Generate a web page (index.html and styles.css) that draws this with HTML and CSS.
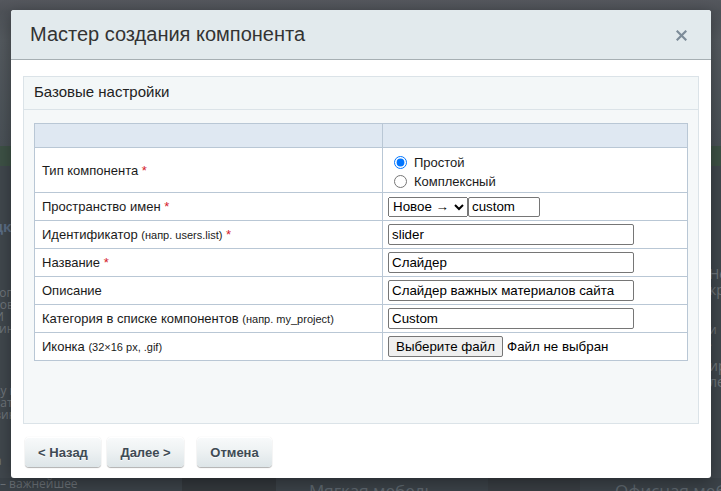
FILE: index.html
```html
<!DOCTYPE html>
<html lang="ru">
<head>
<meta charset="utf-8">
<title>Мастер создания компонента</title>
<link rel="stylesheet" href="styles.css">
</head>
<body>
<div class="page">
  <div class="page-top"></div>
  <div class="page-nav"></div>
  <div class="page-body">
    <div class="page-left">
      <p class="bg-title">Скидки</p>
      <p class="bg-text b1">Каталог нов<br>товаров не и<br>сайт.И<br>магазинт о</p>
      <p class="bg-text b2">Скидку в<br>покупатащ<br>Магазиной</p>
      <p class="bg-text b3">Папка</p>
      <p class="bg-strong">Ме</p>
    </div>
    <div class="page-right">
      <p class="bg-text r1">Не<br>кр</p>
      <p class="bg-text r2">и<br>.</p>
      <p class="bg-text r3">ир<br>ле</p>
    </div>
  </div>
  <div class="page-bottom">
    <p class="bg-small">– важнейшее</p>
    <div class="bg-img"></div>
    <p class="bg-item first">Мягкая мебель</p>
    <div class="bg-img second"></div>
    <p class="bg-item last">Офисная мебель</p>
  </div>
</div>

<div class="dialog">
  <div class="dialog-head">
    <span class="dialog-title">Мастер создания компонента</span>
    <svg class="close" width="11" height="11" viewBox="0 0 11 11"><path d="M1.5 1.5 L9.5 9.5 M9.5 1.5 L1.5 9.5" stroke="#7d8c99" stroke-width="2.2" stroke-linecap="square"/></svg>
  </div>
  <div class="dialog-body">
    <div class="panel">
      <div class="panel-head">Базовые настройки</div>
      <div class="panel-body">
        <table class="form">
          <tr class="head"><td class="c1"></td><td class="c2"></td></tr>
          <tr class="tall">
            <td class="c1">Тип компонента <span class="req">*</span></td>
            <td class="c2">
              <label class="radio"><input type="radio" name="t" checked><span>Простой</span></label>
              <label class="radio"><input type="radio" name="t"><span>Комплексный</span></label>
            </td>
          </tr>
          <tr>
            <td class="c1">Пространство имен <span class="req">*</span></td>
            <td class="c2"><div class="ns"><select class="sel"><option>Новое →</option></select><input class="short" type="text" value="custom"></div></td>
          </tr>
          <tr>
            <td class="c1">Идентификатор <small>(напр. users.list)</small> <span class="req">*</span></td>
            <td class="c2"><input class="txt" type="text" value="slider"></td>
          </tr>
          <tr>
            <td class="c1">Название <span class="req">*</span></td>
            <td class="c2"><input class="txt" type="text" value="Слайдер"></td>
          </tr>
          <tr>
            <td class="c1">Описание</td>
            <td class="c2"><input class="txt" type="text" value="Слайдер важных материалов сайта"></td>
          </tr>
          <tr>
            <td class="c1">Категория в списке компонентов <small>(напр. my_project)</small></td>
            <td class="c2"><input class="txt" type="text" value="Custom"></td>
          </tr>
          <tr>
            <td class="c1">Иконка <small>(32×16 px, .gif)</small></td>
            <td class="c2"><div class="file"><button class="file-btn" type="button">Выберите файл</button><span>Файл не выбран</span></div></td>
          </tr>
        </table>
      </div>
    </div>
    <div class="buttons">
      <button class="btn" type="button">&lt; Назад</button>
      <button class="btn" type="button">Далее &gt;</button>
      <button class="btn cancel" type="button">Отмена</button>
    </div>
  </div>
</div>
</body>
</html>
```

FILE: styles.css
```css
html, body {
  margin: 0;
  padding: 0;
  height: 100%;
  overflow: hidden;
}
body {
  font-family: "Liberation Sans", Arial, sans-serif;
  background: #3e454b;
  position: relative;
}
p { margin: 0; }

/* dimmed page behind the modal */
.page {
  height: 491px;
  display: flex;
  flex-direction: column;
}
.page-top {
  height: 146px;
  flex: none;
  background: linear-gradient(180deg, #55585e 0, #4e5258 12px, #545a5f 40px, #4a5157 145px);
}
.page-nav {
  height: 20px;
  flex: none;
  background: #3d5145;
}
.page-body {
  flex: 1;
  display: flex;
  justify-content: space-between;
  background: #40474d;
  overflow: hidden;
}
.page-left {
  margin-left: -34px;
  width: 60px;
  display: flex;
  flex-direction: column;
}
.page-right {
  margin-right: -12px;
  width: 24px;
  display: flex;
  flex-direction: column;
}
.bg-title {
  margin-top: 53px;
  font: bold 14px/16px "Open Sans", sans-serif;
  color: #5b6e86;
  white-space: nowrap;
}
.bg-text {
  font: 12px/12px "Open Sans", sans-serif;
  color: #6f757a;
  white-space: nowrap;
}
.b1 { margin-top: 52px; }
.b2 { margin-top: 50px; }
.b3 { margin-top: 34px; }
.bg-strong {
  margin-top: 2px;
  font: bold 13px/14px "Open Sans", sans-serif;
  color: #5c6166;
}
.r1 { margin-top: 100px; font-size: 14px; line-height: 16px; }
.r2 { margin-top: 26px; }
.r3 { margin-top: 10px; font-size: 14px; line-height: 16px; }

.page-bottom {
  height: 13px;
  flex: none;
  display: flex;
  align-items: flex-start;
  background: #3b4248;
  overflow: hidden;
}
.bg-small {
  width: 182px;
  flex: none;
  font: 12px/11px "Open Sans", sans-serif;
  color: #6a7076;
  white-space: nowrap;
}
.bg-img { width: 94px; height: 13px; flex: none; background: #33383c; }
.bg-img.second { width: 92px; background: #383d42; }
.bg-item {
  box-sizing: border-box;
  flex: none;
  padding-top: 3px;
  font: 17px/20px "Open Sans", sans-serif;
  color: #5d666d;
  white-space: nowrap;
}
.bg-item.first { width: 212px; padding-left: 33px; overflow: hidden; }
.bg-item.last { padding-left: 35px; }

/* modal dialog */
.dialog {
  position: absolute;
  left: 11px;
  top: 10px;
  width: 700px;
  height: 468px;
  background: #fff;
  border-radius: 3px;
  box-shadow: 0 4px 16px rgba(0, 0, 0, 0.35);
  display: flex;
  flex-direction: column;
  overflow: hidden;
}
.dialog-head {
  height: 49px;
  flex: none;
  background: #e2eaed;
  border-bottom: 1px solid #a6afb3;
  display: flex;
  align-items: center;
  justify-content: space-between;
  padding: 0 24px 0 19px;
}
.dialog-title {
  font-size: 20px;
  color: #333;
  padding-bottom: 1px;
}
.close { margin-top: 2px; }

.dialog-body {
  flex: 1;
  padding: 16px 12px 0;
  display: flex;
  flex-direction: column;
}
.panel {
  height: 346px;
  border: 1px solid #dbe3e8;
  display: flex;
  flex-direction: column;
}
.panel-head {
  height: 33px;
  flex: none;
  box-sizing: border-box;
  border-bottom: 1px solid #dbe3e8;
  background: #f3f7f8;
  padding: 0 10px 3px;
  display: flex;
  align-items: center;
  font-size: 15px;
  color: #222;
}
.panel-body {
  flex: 1;
  background: #f5f8f9;
  padding: 13px 10px 12px;
}

.form {
  width: 654px;
  border-collapse: collapse;
  font-size: 13px;
  color: #1a1a1a;
}
.form td {
  border: 1px solid #b9c7d5;
  background: #fff;
  height: 27px;
  padding: 0 7px;
  vertical-align: middle;
}
.form .c1 { width: 333px; }
.form .c2 { padding: 0 5px; }
.form tr.head td {
  height: 23px;
  background: #dfe8f2;
}
.form tr.tall td { height: 44px; }
.form tr.tall td.c2 { padding-top: 3px; box-sizing: border-box; }
.form small { font-size: 11px; }
.req { color: #d4202a; }

.radio {
  display: flex;
  align-items: center;
  height: 19px;
}
.radio input {
  margin: 0 7px 0 6px;
  width: 13px;
  height: 13px;
}
.ns { display: flex; }
.sel {
  width: 80px;
  height: 20px;
  font: 13.333px "Liberation Sans", Arial, sans-serif;
  color: #000;
  margin: 0;
}
.short {
  width: 72px;
  height: 20px;
  box-sizing: border-box;
  font: 13.333px "Liberation Sans", Arial, sans-serif;
  margin: 0;
}
.txt {
  width: 246px;
  height: 21px;
  box-sizing: border-box;
  font: 13.333px "Liberation Sans", Arial, sans-serif;
  margin: 0;
  display: block;
}
input[type="text"] {
  border: 1px solid #767676;
  border-radius: 2px;
  padding: 1px 3px;
  color: #000;
}
.file {
  display: flex;
  align-items: center;
  gap: 4px;
  font-size: 13.333px;
  color: #000;
}
.file-btn {
  width: 115px;
  height: 21px;
  font: 13.333px "Liberation Sans", Arial, sans-serif;
  color: #000;
  background: #efefef;
  border: 1px solid #767676;
  border-radius: 2px;
  padding: 0;
  margin: 0;
}

.buttons {
  display: flex;
  gap: 6px;
  padding: 13px 0 0 2px;
}
.btn {
  height: 30px;
  padding: 0 12px;
  border: none;
  border-radius: 4px;
  background: linear-gradient(180deg, #f8fafb 0, #eef2f3 45%, #dde5e8 100%);
  box-shadow: 0 0 1px rgba(0,0,0,0.15), 0 1px 1px rgba(0,0,0,0.3), inset 0 1px #fff;
  font: bold 13px "Liberation Sans", Arial, sans-serif;
  color: #3f4b54;
  text-shadow: 0 1px rgba(255,255,255,0.7);
}
.btn:nth-child(1) { width: 76px; }
.btn:nth-child(2) { width: 77px; }
.btn.cancel { width: 75px; margin-left: 7px; }
```
